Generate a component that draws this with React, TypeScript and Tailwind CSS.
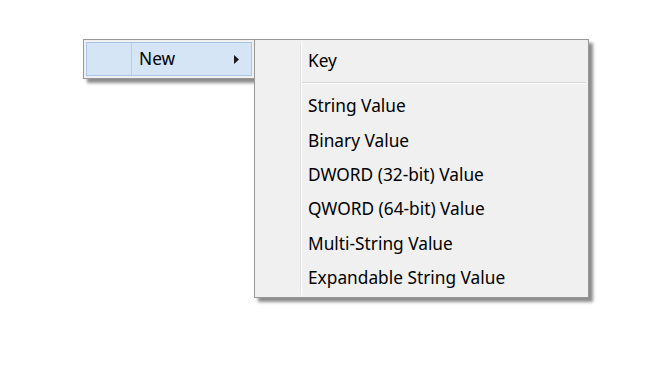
import React, { FC } from "react";

const items = [
    "String Value",
    "Binary Value",
    "DWORD (32-bit) Value",
    "QWORD (64-bit) Value",
    "Multi-String Value",
    "Expandable String Value",
];

const MainMenu: FC = () => (
    <div className="w-[172px] h-[40px] shrink-0 bg-[#f0f0f0] border border-[#979797] p-[2px] shadow-[4px_4px_3px_rgba(0,0,0,0.45)]">
        <div className="flex h-full bg-[#d5e5f6] border border-[#a9c6e8]">
            <div className="w-[45px] border-r border-[#b9cfe8]" />
            <div className="flex flex-1 items-center pl-[7px] pr-[12px] text-[17.3px] text-black">
                <span className="flex-1">New</span>
                <svg width="5" height="9" viewBox="0 0 5 9">
                    <path d="M0 0 L5 4.5 L0 9 Z" fill="#1a1a1a" />
                </svg>
            </div>
        </div>
    </div>
);

const SubMenu: FC = () => (
    <div className="w-[335px] h-[259px] -ml-[1px] bg-[#f0f0f0] border border-[#979797] shadow-[4px_4px_3px_rgba(0,0,0,0.45)] relative">
        <div className="absolute left-[45px] top-[2px] bottom-[2px] w-px bg-[#e2e2e2]" />
        <div className="absolute left-[46px] top-[2px] bottom-[2px] w-px bg-white" />
        <div className="flex flex-col pt-[1px]">
            <div className="h-[39px] flex items-center pl-[53px] text-[17.3px] text-black">Key</div>
            <div className="ml-[46px] mr-[2px] h-[9px] pt-[2px]">
                <div className="h-px bg-[#d6d6d6]" />
                <div className="h-px bg-white" />
            </div>
            {items.map((label) => (
                <div key={label} className="h-[34.4px] flex items-center pl-[53px] text-[17.3px] text-black">
                    {label}
                </div>
            ))}
        </div>
    </div>
);

export default function App() {
    return (
        <div
            className="w-[659px] h-[368px] bg-white flex items-start pl-[83px] pt-[39px]"
            style={{ fontFamily: '"Noto Sans", "Open Sans", sans-serif' }}
        >
            <MainMenu />
            <SubMenu />
        </div>
    );
}
